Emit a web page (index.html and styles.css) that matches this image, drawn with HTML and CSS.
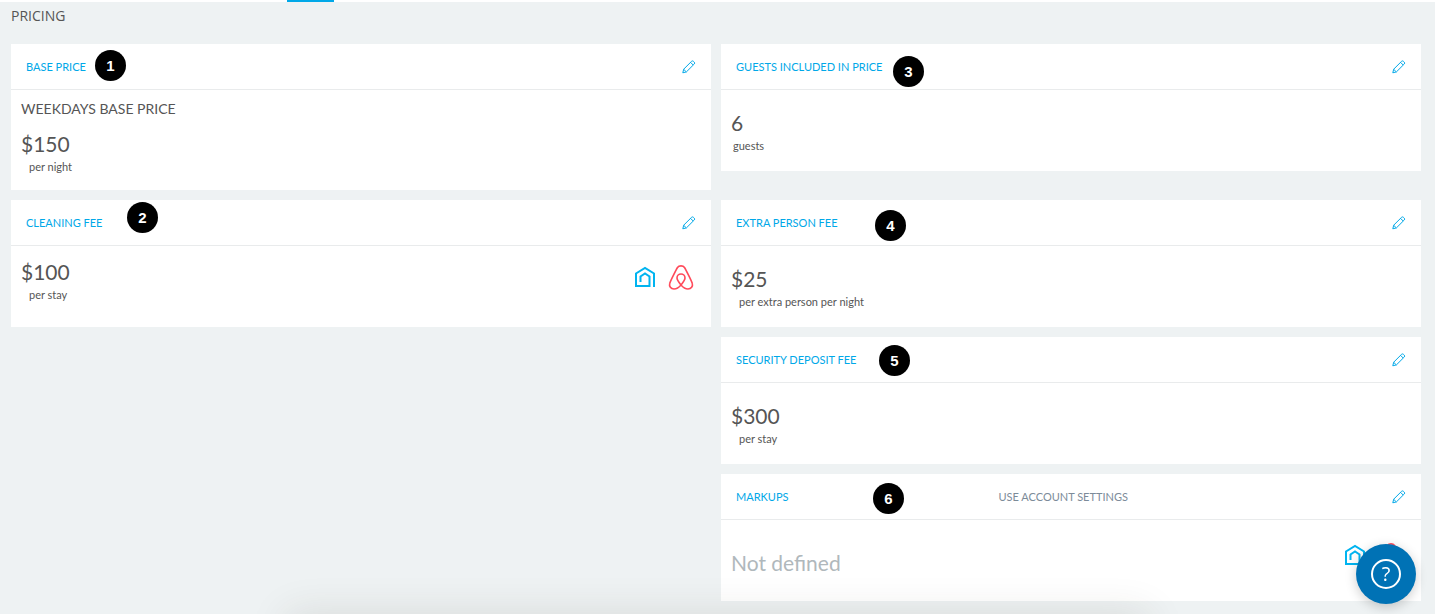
FILE: index.html
```html
<!DOCTYPE html>
<html lang="en">
<head>
    <meta charset="UTF-8">
    <meta name="viewport" content="width=device-width, initial-scale=1.0">
    <title>Pricing</title>
    <link rel="stylesheet" href="styles.css">
</head>
<body>
    <svg class="sprite" aria-hidden="true">
        <symbol id="pencil" viewBox="0 0 14 14">
            <path d="M.8 12.800l.9-3.600L9.600 1.300q.9-.8 1.800 0l.9.900q.8.900 0 1.800L4.400 11.900z M8.600 2.400l2.600 2.600 M1.700 9.300l2.600 2.600"/>
        </symbol>
        <symbol id="house" viewBox="0 0 22 22">
            <path d="M20 21V7.500L11 2 2 7.500V20h13.500v-9.500L11 7.500l-4.500 3V16"/>
        </symbol>
        <symbol id="airbnb" viewBox="0 0 26 26">
            <path d="M13 21C10.500 18 9 16 9 14a4 4 0 0 1 8 0C17 16 15.500 18 13 21c-2.500 3-4.500 4-7 4C2.700 25 1 22 1.700 19.500 2.200 17.500 8 6 9.500 3.500 11 1.300 15 1.300 16.500 3.500 18 6 23.800 17.500 24.300 19.500c.7 2.500-1 5.500-4.300 5.500-2.500 0-4.500-1-7-4z"/>
        </symbol>
    </svg>

    <div class="tab-bar">
        <div class="active-tab"></div>
    </div>

    <main class="pricing">
        <h1>PRICING</h1>

        <div class="cards">
            <section class="card">
                <div class="card-header">
                    <h2>BASE PRICE</h2>
                    <button class="edit-button" aria-label="Edit base price"><svg><use href="#pencil"/></svg></button>
                    <span class="step step-1">1</span>
                </div>
                <div class="card-body base-price">
                    <h3>WEEKDAYS BASE PRICE</h3>
                    <div class="value">$150</div>
                    <div class="unit">per night</div>
                </div>
            </section>

            <section class="card right">
                <div class="card-header">
                    <h2>GUESTS INCLUDED IN PRICE</h2>
                    <button class="edit-button" aria-label="Edit guests included"><svg><use href="#pencil"/></svg></button>
                    <span class="step step-3">3</span>
                </div>
                <div class="card-body">
                    <div class="value">6</div>
                    <div class="unit guests">guests</div>
                </div>
            </section>

            <section class="card">
                <div class="card-header">
                    <h2>CLEANING FEE</h2>
                    <button class="edit-button" aria-label="Edit cleaning fee"><svg><use href="#pencil"/></svg></button>
                    <span class="step step-2">2</span>
                </div>
                <div class="card-body with-channels">
                    <div>
                        <div class="value">$100</div>
                        <div class="unit">per stay</div>
                    </div>
                    <div class="channels">
                        <svg class="house"><use href="#house"/></svg>
                        <svg class="airbnb"><use href="#airbnb"/></svg>
                    </div>
                </div>
            </section>

            <section class="card right">
                <div class="card-header">
                    <h2>EXTRA PERSON FEE</h2>
                    <button class="edit-button" aria-label="Edit extra person fee"><svg><use href="#pencil"/></svg></button>
                    <span class="step step-4">4</span>
                </div>
                <div class="card-body">
                    <div class="value">$25</div>
                    <div class="unit">per extra person per night</div>
                </div>
            </section>

            <section class="card right">
                <div class="card-header">
                    <h2>SECURITY DEPOSIT FEE</h2>
                    <button class="edit-button" aria-label="Edit security deposit fee"><svg><use href="#pencil"/></svg></button>
                    <span class="step step-5">5</span>
                </div>
                <div class="card-body">
                    <div class="value">$300</div>
                    <div class="unit">per stay</div>
                </div>
            </section>

            <section class="card right">
                <div class="card-header markups-header">
                    <h2>MARKUPS</h2>
                    <span class="account-settings">USE ACCOUNT SETTINGS</span>
                    <button class="edit-button" aria-label="Edit markups"><svg><use href="#pencil"/></svg></button>
                    <span class="step step-6">6</span>
                </div>
                <div class="card-body with-channels markups">
                    <div class="value empty">Not defined</div>
                    <div class="channels">
                        <svg class="house"><use href="#house"/></svg>
                        <svg class="airbnb"><use href="#airbnb"/></svg>
                    </div>
                </div>
            </section>
        </div>
    </main>

    <div class="bottom-shadow"></div>

    <button class="help-button" aria-label="Help"><span>?</span></button>
</body>
</html>
```
FILE: styles.css
```css
* {
    box-sizing: border-box;
}

body {
    margin: 0;
    min-height: 100vh;
    background-color: #eef2f3;
    color: #555;
    font-family: Lato, sans-serif;
    overflow-x: hidden;
}

h1, h2, h3 {
    margin: 0;
    font-weight: 400;
}

button {
    padding: 0;
    border: none;
    background: none;
    cursor: pointer;
}

.sprite {
    display: none;
}

.tab-bar {
    height: 2px;
    padding-left: 20%;
    background-color: #fff;
}

.active-tab {
    width: 47px;
    height: 2px;
    background-color: #00a8e8;
}

.pricing {
    padding: 4px 14px 13px 11px;
}

h1 {
    margin-bottom: 18px;
    font-family: "Open Sans", sans-serif;
    font-size: 14px;
    line-height: 20px;
}

.cards {
    display: grid;
    grid-template-columns: 1fr 1fr;
    gap: 10px;
    align-items: start;
}

.card {
    background-color: #fff;
}

.card.right {
    grid-column: 2;
}

.card-header {
    position: relative;
    display: flex;
    align-items: center;
    justify-content: space-between;
    height: 46px;
    padding: 0 15px;
    border-bottom: 1px solid #e9ebec;
}

h2 {
    color: #00a8e8;
    font-size: 11px;
    line-height: 16px;
}

.edit-button {
    width: 14px;
    height: 14px;
    color: #00a8e8;
}

.edit-button svg {
    display: block;
    width: 14px;
    height: 14px;
    fill: none;
    stroke: currentColor;
    stroke-width: 1;
}

.markups-header {
    display: grid;
    grid-template-columns: 2fr 3fr 14px;
}

.account-settings {
    color: #7c8b99;
    font-size: 11px;
    line-height: 16px;
}

.card-body {
    min-height: 81px;
    padding: 19px 15px 14px 10px;
}

.card-body.base-price {
    min-height: 100px;
    padding-top: 9px;
}

h3 {
    margin-bottom: 11px;
    font-size: 14px;
    line-height: 20px;
}

.value {
    margin-bottom: 1px;
    font-size: 21px;
    line-height: 28px;
}

.value.empty {
    color: #b0b8bc;
}

.unit {
    padding-left: 8px;
    font-size: 11px;
    line-height: 16px;
}

.unit.guests {
    padding-left: 2px;
}

.with-channels {
    display: flex;
    align-items: flex-start;
    justify-content: space-between;
    padding-top: 12px;
}

.with-channels.markups {
    align-items: center;
    padding: 21px 15px 15px 10px;
}

.channels {
    display: flex;
    align-items: center;
    gap: 12px;
    padding: 6px 2px 0 0;
}

.markups .channels {
    padding: 0 2px 18px 0;
}

.channels svg {
    fill: none;
}

.house {
    width: 22px;
    height: 22px;
    stroke: #00b4f0;
    stroke-width: 2;
}

.airbnb {
    width: 26px;
    height: 26px;
    stroke: #ff4a5a;
    stroke-width: 1.6;
}

/* Numbered markers */
.step {
    position: absolute;
    width: 31px;
    height: 31px;
    border-radius: 50%;
    background-color: #000;
    color: #fff;
    font-family: "Liberation Sans", sans-serif;
    font-size: 15px;
    font-weight: 700;
    line-height: 31px;
    text-align: center;
}

.step-1 {
    top: 6px;
    left: 84px;
}

.step-2 {
    top: 2px;
    left: 116px;
}

.step-3 {
    top: 12px;
    left: 172px;
}

.step-4 {
    top: 10px;
    left: 154px;
}

.step-5 {
    top: 8px;
    left: 158px;
}

.step-6 {
    top: 9px;
    left: 152px;
}

.bottom-shadow {
    position: fixed;
    top: 100%;
    left: 20%;
    right: 20%;
    height: 40px;
    box-shadow: 0 0 40px rgba(60, 50, 30, 0.12);
}

.help-button {
    position: fixed;
    right: 19px;
    bottom: 10px;
    display: flex;
    align-items: center;
    justify-content: center;
    width: 60px;
    height: 60px;
    border-radius: 50%;
    background-color: #0072b5;
    box-shadow: 0 3px 12px rgba(0, 0, 0, 0.2);
}

.help-button span {
    width: 30px;
    height: 30px;
    border: 2px solid #fff;
    border-radius: 50%;
    color: #fff;
    font-family: "Open Sans", sans-serif;
    font-size: 20px;
    font-weight: 400;
    line-height: 26px;
}
```
